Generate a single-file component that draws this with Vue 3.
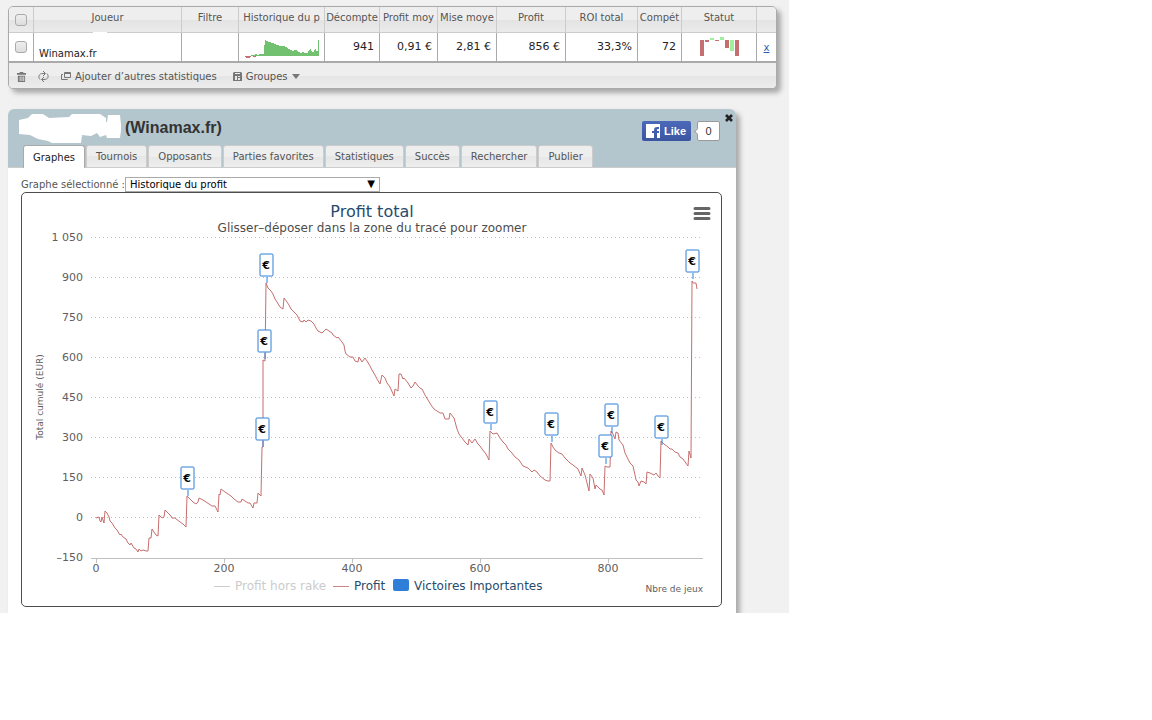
<template>
  <div class="page">
    <section class="stats">
      <table>
        <colgroup>
          <col v-for="(w, i) in widths" :key="i" :style="{ width: w + '%' }" />
        </colgroup>
        <thead>
          <tr>
            <th><input type="checkbox" class="check" aria-label="Tout sélectionner" /></th>
            <th v-for="title in columns" :key="title"><div class="clip">{{ title }}</div></th>
            <th></th>
          </tr>
        </thead>
        <tbody>
          <tr>
            <td class="center"><input type="checkbox" class="check" aria-label="Sélectionner le joueur" /></td>
            <td class="player"><span class="hidden-name"></span>Winamax.fr</td>
            <td></td>
            <td class="history">
              <svg class="spark" width="76" height="20" viewBox="0 0 76 20">
                <path fill="#71c171" d="M7 17V16H11V15H13V16H15V15H20V6H21V1H22V2H24V3H27V4H30V5H32V6H35V7H41V8H43V9H44V10H46V11H48V12H50V11H53V12H54V13H56V14H58V13H60V14H64V12H65V11H66V10H67V12H68V13H70V11H71V10H72V12H74V1H75V17z" />
                <path fill="#c66f6f" d="M1 17H7V18H6V19H2V18H1zM9 17H12V18H9z" />
              </svg>
            </td>
            <td class="num">941</td>
            <td class="num">0,91 €</td>
            <td class="num">2,81 €</td>
            <td class="num">856 €</td>
            <td class="num">33,3%</td>
            <td class="num">72</td>
            <td class="center">
              <svg class="bars" width="38" height="20" viewBox="0 0 38 20">
                <g fill="#c66f6f">
                  <rect x="0" y="3" width="4" height="16" />
                  <rect x="5" y="3" width="4" height="2" />
                  <rect x="15" y="3" width="4" height="1" />
                  <rect x="25" y="3" width="4" height="8" />
                  <rect x="35" y="3" width="4" height="16" />
                </g>
                <g fill="#9fef9f">
                  <rect x="10" y="1" width="4" height="2" />
                  <rect x="20" y="0" width="4" height="3" />
                  <rect x="30" y="3" width="4" height="11" />
                </g>
              </svg>
            </td>
            <td class="center"><a href="#" class="remove">x</a></td>
          </tr>
        </tbody>
      </table>
      <div class="toolbar">
        <button class="tool trash" aria-label="Supprimer">
          <svg width="9" height="10" viewBox="0 0 10 11">
            <path fill="#777" fill-rule="evenodd" d="M3 0h4v1h3v2H0V1h3zM1 4h8v7H1zM3 5v5h1V5zM5 5v5h1V5zM7 5v5h1V5z" />
          </svg>
        </button>
        <button class="tool refresh" aria-label="Actualiser">
          <svg width="11" height="11" viewBox="0 0 11 11" fill="none" stroke="#777">
            <path d="M2 8.500C0 6 .5 2.500 5 2.500h2M5 0l2.500 2.500L5 5M9 2.500c2 2.500 1.500 6-3 6H4M6 6L3.500 8.500 6 11" />
          </svg>
        </button>
        <button class="tool add">
          <svg width="10" height="9" viewBox="0 0 10 9" fill="none" stroke="#777">
            <path d="M3.500 .5h6v5h-6zM3.500 1.500h6M2 2.500H.5v5h6V7" />
          </svg>
          Ajouter d’autres statistiques
        </button>
        <button class="tool groups">
          <svg width="9" height="9" viewBox="0 0 9 9">
            <path fill="#777" fill-rule="evenodd" d="M1 0h7l1 1v8H0V1zM2 1v1h5V1zM2 4v4h2V4zM5 4v1h2V4zM5 6v2h2V6z" />
          </svg>
          Groupes
          <svg width="8" height="5" viewBox="0 0 8 5"><path fill="#777" d="M0 0h8L4 5z" /></svg>
        </button>
      </div>
    </section>

    <section class="panel">
      <header>
        <div class="heading">
          <svg class="smudge" width="102" height="30" viewBox="0 0 102 30">
            <path fill="#fff" d="M0 7L9 5 13 1H24L30 5 50 4 53 1H81L87 5V9H88L89 2H101L102 12V17L101 25H88L87 22 81 24 78 20 72 23 63 22 62 30H33L29 28 19 26 11 22 0 21z" />
          </svg>
          <h1>(Winamax.fr)</h1>
          <div class="like">
            <button class="like-button">
              <svg width="14" height="14" viewBox="0 0 14 14">
                <path fill="#fff" d="M0 0h14v14h-3V9h2V7h-2V5.500l1-.5h1V3h-2Q8 3 8 6v1H6v2h2v5H0z" />
              </svg>
              Like
            </button>
            <span class="count">0</span>
          </div>
          <button class="close" aria-label="Fermer">
            <svg width="8" height="8" viewBox="0 0 8 8"><path stroke="#222" stroke-width="2.600" d="M1 1l6 6M7 1L1 7" /></svg>
          </button>
        </div>
        <nav>
          <button
            v-for="tab in tabs"
            :key="tab"
            class="tab"
            :class="{ active: tab === currentTab }"
            @click="currentTab = tab"
          >{{ tab }}</button>
        </nav>
      </header>

      <div class="body">
        <div class="chooser">
          <label for="graph">Graphe sélectionné :</label>
          <div class="select">
            <select id="graph">
              <option>Historique du profit</option>
            </select>
            <span class="arrow">▼</span>
          </div>
        </div>

        <div class="chart">
          <svg viewBox="22 193 699 413">
            <text class="title" x="372" y="217" text-anchor="middle">Profit total</text>
            <text class="subtitle" x="372" y="232" text-anchor="middle">Glisser–déposer dans la zone du tracé pour zoomer</text>
            <path class="burger" d="M695 208.500h14M695 213.500h14M695 218.500h14" />

            <g v-for="(label, i) in yLabels" :key="label">
              <path v-if="i < 8" class="grid" :d="`M91 ${237.5 + i * 40}H703`" />
              <text class="axis" x="83" :y="241 + i * 40" text-anchor="end">{{ label }}</text>
            </g>
            <path class="base" d="M91 558.500H703" />
            <g v-for="(label, i) in xLabels" :key="label">
              <path class="tick" :d="`M${96.5 + i * 128} 559v4`" />
              <text class="axis" :x="96 + i * 128" y="572" text-anchor="middle">{{ label }}</text>
            </g>
            <text class="small" transform="translate(43 397) rotate(-90)" text-anchor="middle">Total cumulé (EUR)</text>
            <text class="small" x="703" y="592" text-anchor="end">Nbre de jeux</text>

            <polyline class="profit" :points="profit" />

            <g v-for="[x, y] in wins" :key="x">
              <path class="flag" :d="`M${x + 1} ${y + 24}v6`" />
              <rect class="flag" :x="x - 6" :y="y + 1" width="13" height="22" rx="1" />
              <text class="euro" :x="x" :y="y + 16" text-anchor="middle">€</text>
            </g>

            <path stroke="#ccc" d="M214 586.500h16" />
            <text class="legend off" x="235" y="590">Profit hors rake</text>
            <path stroke="#c88686" d="M333 586.500h16" />
            <text class="legend" x="354" y="590">Profit</text>
            <rect x="393" y="579" width="16" height="12" rx="2" fill="#2f7ed8" />
            <text class="legend" x="414" y="590">Victoires Importantes</text>
          </svg>
        </div>
      </div>
    </section>
  </div>
</template>

<script setup>
import { ref } from 'vue';

const columns = ['Joueur', 'Filtre', 'Historique du p', 'Décompte', 'Profit moy', 'Mise moye', 'Profit', 'ROI total', 'Compét', 'Statut'];
const widths = [25, 148, 57, 86, 55, 58, 59, 69, 72, 44, 75, 19].map((w) => (w / 767) * 100);

const tabs = ['Graphes', 'Tournois', 'Opposants', 'Parties favorites', 'Statistiques', 'Succès', 'Rechercher', 'Publier'];
const currentTab = ref('Graphes');

const yLabels = ['1 050', '900', '750', '600', '450', '300', '150', '0', '–150'];
const xLabels = ['0', '200', '400', '600', '800'];

// x and top of each flag
const wins = [
  [187, 466], [262, 417], [264, 329], [266, 253], [490, 400],
  [551, 412], [605, 434], [611, 403], [661, 415], [692, 249]
];

const profit = `
  96,518 99,517 100,521 101,522 102,517 104,523 105,511 107,513 109,517 110,521 112,523 115,528 117,530 120,535
  121,534 123,537 126,539 128,543 130,545 131,543 134,548 136,549 138,552 139,549 141,551 143,550 146,551 148,551
  149,538 151,538 152,529 154,532 156,535 158,536 159,515 162,518 164,517 165,510 168,513 171,516 172,518 175,518
  180,522 183,524 186,527 187,496 190,499 193,502 196,504 198,502 199,498 203,500 206,502 209,504 212,506 215,506
  218,512 219,494 220,495 221,489 225,492 228,494 231,496 234,499 238,502 241,502 242,499 245,501 248,503 250,503
  253,508 254,503 257,503 258,493 259,494 261,496 262,447 263,447 263,360 265,361 266,283 268,288 271,291 273,294
  275,299 277,302 280,307 283,309 284,298 287,302 289,305 291,309 294,312 297,315 300,321 303,322 304,320 306,322
  308,320 311,321 314,324 316,328 318,331 322,333 324,331 326,329 329,331 332,333 333,335 337,338 338,337 342,342
  344,345 345,351 346,354 350,357 353,357 355,361 358,362 359,357 362,362 365,358 367,361 370,366 372,370 375,375
  377,379 380,384 382,375 385,378 387,383 390,387 394,396 395,389 398,391 399,374 401,374 403,379 404,378 408,383
  411,388 413,386 415,382 418,386 420,388 422,389 425,395 428,400 431,405 434,409 437,411 440,413 443,413 445,419
  449,419 450,413 454,418 457,429 459,434 462,438 465,442 468,445 469,439 472,443 475,439 478,444 480,446 482,449
  486,454 489,460 490,431 493,434 497,433 500,438 503,442 506,445 508,449 512,453 515,457 519,460 523,466 528,468
  532,472 534,470 537,472 540,476 545,480 548,481 550,481 551,443 553,447 555,450 559,453 562,454 565,458 567,460
  570,463 573,465 578,469 581,476 582,468 585,475 589,491 590,474 593,478 595,489 596,485 600,489 602,490 604,495
  605,466 607,467 610,467 611,431 613,434 615,439 616,432 618,433 619,440 623,445 625,453 628,459 630,463 633,466
  635,475 636,480 638,482 639,486 641,481 644,482 646,484 647,472 650,473 652,474 654,475 656,473 658,476 660,478
  661,441 664,444 668,447 670,449 672,449 675,452 678,453 680,457 683,459 688,466 689,451 691,458 692,281 693,283
  696,283 697,289
`;
</script>

<style>
body {
  background: #fff;
}
</style>

<style scoped>
.page {
  max-width: 789px;
  box-sizing: border-box;
  padding: 6px 12px 0 8px;
  overflow: hidden;
  background: #f1f1f1;
  font-family: 'DejaVu Sans', sans-serif;
  font-size: 10px;
  color: #555;
}

button {
  font: inherit;
  color: inherit;
  padding: 0;
  border: 0;
  background: none;
}

.stats {
  border: 1px solid #aaa;
  border-radius: 5px;
  overflow: hidden;
  box-shadow: 4px 4px 5px #aaa;
  background: #ececec;
}

table {
  width: 100%;
  table-layout: fixed;
  border-collapse: separate;
  border-spacing: 0;
}

th,
td {
  box-sizing: border-box;
  padding: 0;
  border-right: 1px solid #aaa;
}

th:last-child,
td:last-child {
  border-right: 0;
}

th {
  height: 26px;
  font-weight: normal;
  border-right-color: #ccc;
  border-bottom: 1px solid #ccc;
  background: linear-gradient(#eee 50%, #e3e3e3 50%, #ebebeb);
}

.clip {
  margin: 0 1px 4px;
  overflow: hidden;
  white-space: nowrap;
}

td {
  height: 30px;
  background: #fff;
  border-bottom: 2px solid #aaa;
  color: #222;
}

.check {
  appearance: none;
  display: block;
  width: 12px;
  height: 12px;
  margin: 0 auto;
  border: 1px solid #aaa;
  border-radius: 3px;
  background: linear-gradient(#eee, #ddd);
}

.center {
  text-align: center;
}

.player {
  position: relative;
  padding: 12px 0 0 5px;
}

.hidden-name {
  position: absolute;
  top: -1px;
  left: 59px;
  width: 14px;
  height: 2px;
  background: #fff;
}

.history {
  padding: 4px 0 0 2px;
}

.num {
  padding: 0 5px 2px 0;
  font-size: 11px;
  text-align: right;
  white-space: nowrap;
}

.spark,
.bars {
  display: block;
  margin: 0 auto;
  overflow: visible;
}

.remove {
  color: #2a5db0;
}

.toolbar {
  display: flex;
  align-items: center;
  box-sizing: border-box;
  height: 25px;
  padding: 2px 0 0 8px;
  background: linear-gradient(#eee 50%, #e5e5e5 50%, #ececec);
}

.tool {
  display: flex;
  align-items: center;
  gap: 4px;
  margin-right: 12px;
}

.tool.add {
  margin-right: 16px;
}

.panel {
  width: 94.670%;
  margin-top: 20px;
  border-radius: 6px 6px 0 0;
  background: #fff;
  box-shadow: 4px 4px 5px #aaa;
}

header {
  border-radius: 6px 6px 0 0;
  border-bottom: 1px solid #ccc;
  background: #b3c6cd;
}

.heading {
  display: flex;
  align-items: flex-start;
  height: 36px;
  padding-left: 11px;
}

.smudge {
  margin-top: 4px;
}

h1 {
  margin: 10px 0 0 4px;
  font: bold 16px/18px 'Liberation Sans', sans-serif;
  color: #333;
}

.like {
  display: flex;
  gap: 6px;
  margin: 12px 5px 0 auto;
}

.like-button {
  display: flex;
  align-items: center;
  gap: 4px;
  height: 20px;
  padding: 0 5px 0 4px;
  border-radius: 2px;
  background: linear-gradient(#4c69ba, #3b55a0);
  color: #fff;
  font: bold 11px 'Liberation Sans', sans-serif;
}

.count {
  position: relative;
  box-sizing: border-box;
  width: 23px;
  height: 20px;
  border: 1px solid #999;
  border-radius: 2px;
  background: #fff;
  color: #333;
  font: 11px/18px 'Liberation Sans', sans-serif;
  text-align: center;
}

.count::before {
  content: '';
  position: absolute;
  left: -3px;
  top: 7px;
  width: 4px;
  height: 4px;
  border: solid #999;
  border-width: 0 0 1px 1px;
  background: #fff;
  transform: rotate(45deg);
}

.close {
  margin: 5px 3px 0 0;
  line-height: 0;
}

nav {
  display: flex;
  gap: 1px;
  padding-left: 15px;
}

.tab {
  height: 22px;
  padding: 0 9px;
  border: 1px solid #ccc;
  border-bottom: 0;
  border-radius: 3px 3px 0 0;
  background: linear-gradient(#eee 50%, #e6e6e6 50%, #eee);
}

.tab.active {
  height: 23px;
  margin-bottom: -1px;
  border-color: #aaa;
  background: #fff;
  color: #222;
}

.body {
  padding: 9px 14px 6px 13px;
}

.chooser {
  display: flex;
  align-items: center;
}

.select {
  position: relative;
  width: 255px;
}

select {
  appearance: none;
  display: block;
  width: 100%;
  height: 15px;
  padding: 0 4px;
  border: 1px solid #aaa;
  border-radius: 0;
  background: #fff;
  color: #000;
  font: inherit;
}

.arrow {
  position: absolute;
  right: 5px;
  top: 1px;
  color: #000;
  line-height: 12px;
  pointer-events: none;
}

.chart {
  border: 1px solid #4d4d4d;
  border-radius: 5px;
}

.chart svg {
  display: block;
  width: 100%;
}

.title {
  font-size: 16px;
  fill: #274b6d;
}

.subtitle {
  font-size: 12px;
  fill: #4d4d4d;
}

.axis {
  font-size: 11px;
  fill: #606060;
}

.small {
  font-size: 9px;
  fill: #606060;
}

.legend {
  font-size: 12px;
  fill: #274b6d;
}

.legend.off {
  fill: #ccc;
}

.grid {
  stroke: #c0c0c0;
  stroke-dasharray: 1 3;
}

.base,
.tick {
  stroke: #c0c0c0;
}

.burger {
  stroke: #666;
  stroke-width: 3px;
  stroke-linecap: round;
}

.profit {
  fill: none;
  stroke: #c66f6f;
  stroke-width: 1px;
  stroke-linejoin: round;
}

.flag {
  fill: #fff;
  stroke: #2f7ed8;
  stroke-width: 1px;
}

.euro {
  font-size: 11px;
  font-weight: bold;
  fill: #000;
}
</style>
